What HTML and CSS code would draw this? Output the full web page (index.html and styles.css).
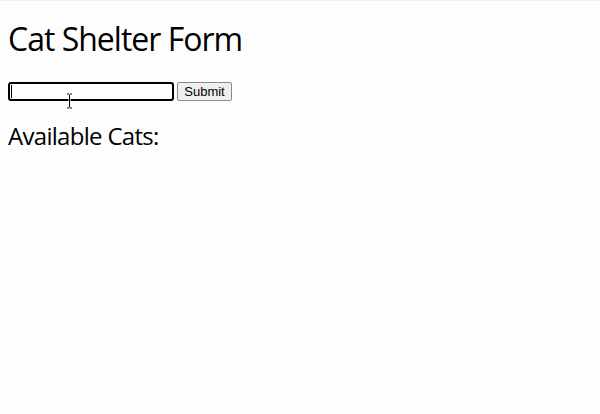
FILE: index.html
```html
<!DOCTYPE html>
<html>
<head>
<meta charset="utf-8">
<link rel="stylesheet" href="styles.css">
</head>
<body>
<h1 class="title">Cat Shelter Form</h1>
<form class="cat-form">
<div class="input-wrap">
<input class="cat-input" type="text">
<span class="caret"></span>
<svg class="ibeam" width="7" height="16" viewBox="0 0 7 16"><path d="M0.5 0.5h2.5v15h-2.5M6.5 0.5h-2.5v15h2.5" fill="none" stroke="#fff" stroke-width="1"/><path d="M1 1h2M4 1h2M1 15h2M4 15h2M3.5 1.5v13" fill="none" stroke="#000" stroke-width="1"/></svg>
</div>
<button class="submit" type="button">Submit</button>
</form>
<h2 class="subtitle">Available Cats:</h2>
</body>
</html>
```

FILE: styles.css
```css
html { background: #fefdfe; }
body {
  margin: 0;
  padding: 0 8px 8px;
  font-family: "Open Sans", sans-serif;
  color: #000;
  border-top: 1px solid #f0eef0;
}
.title {
  font-size: 32px;
  font-weight: 400;
  letter-spacing: -1px;
  margin: 16px 0 0;
  line-height: 44px;
}
.cat-form {
  margin: 21px 0 0;
  display: flex;
  align-items: center;
  gap: 3px;
}
.input-wrap {
  position: relative;
  display: flex;
}
.cat-input {
  width: 166px;
  height: 19px;
  box-sizing: border-box;
  border: 2px solid #000;
  border-radius: 3px;
  padding: 0 2px;
  margin: 0;
  outline: none;
  background: #fff;
  font-family: "Liberation Sans", Arial, sans-serif;
  font-size: 13px;
}
.caret {
  position: absolute;
  left: 3px;
  top: 3px;
  width: 1px;
  height: 13px;
  background: #000;
}
.ibeam {
  position: absolute;
  left: 58px;
  top: 11px;
}
.submit {
  height: 19px;
  width: 55px;
  box-sizing: border-box;
  margin: 0;
  padding: 0 6px;
  font-family: "Liberation Sans", Arial, sans-serif;
  font-size: 13px;
  background: #efefef;
  border: 1px solid #8a8a8a;
  border-radius: 2px;
  color: #000;
}
.subtitle {
  font-size: 24px;
  font-weight: 400;
  letter-spacing: -0.7px;
  margin: 18px 0 0;
  line-height: 33px;
}
```
